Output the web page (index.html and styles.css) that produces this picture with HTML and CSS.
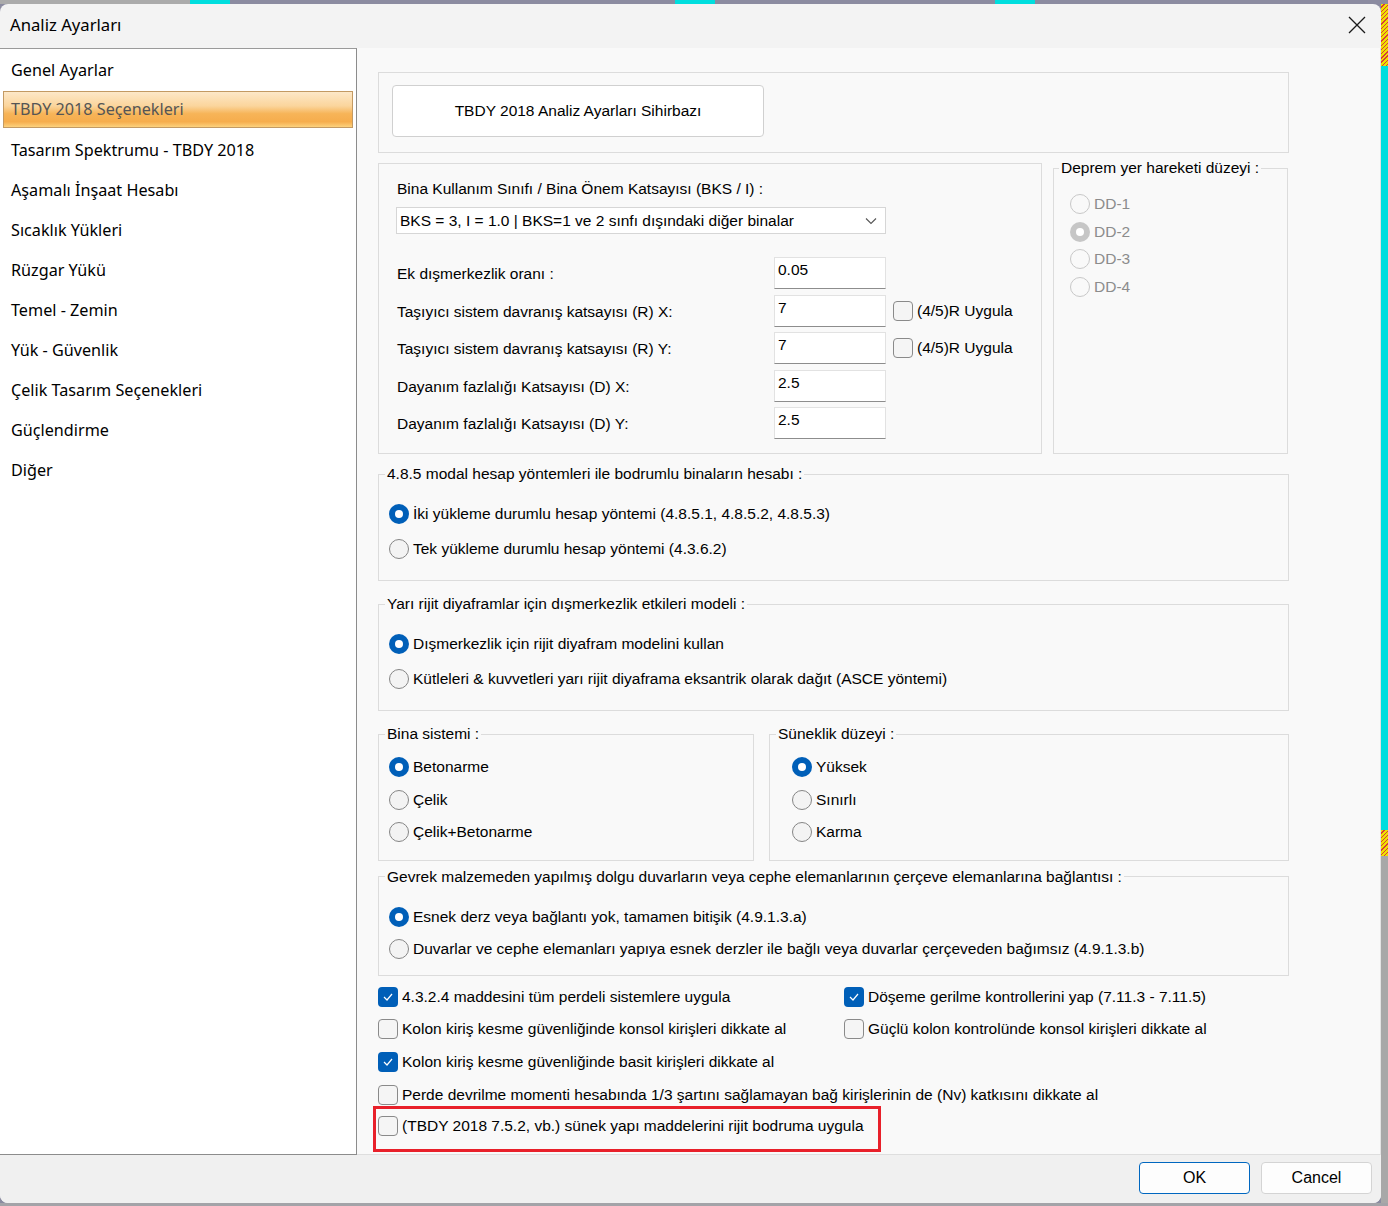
FILE: index.html
```html
<!DOCTYPE html>
<html lang="tr">
<head>
    <meta charset="UTF-8">
    <title>Analiz Ayarları</title>
    <link rel="stylesheet" href="styles.css">
</head>
<body>
    <div class="desk">
        <div class="topstrip">
            <span class="seg seg-gray"></span>
            <span class="seg seg-cyan"></span>
            <span class="seg seg-blue seg-w1"></span>
            <span class="seg seg-cyan"></span>
            <span class="seg seg-blue seg-w2"></span>
            <span class="seg seg-cyan"></span>
            <span class="seg seg-blue seg-fill"></span>
        </div>
        <div class="middle">
            <div class="dialog">
                <div class="titlebar">
                    <span class="title">Analiz Ayarları</span>
                    <svg class="close" width="18" height="18" viewBox="0 0 18 18">
                        <path d="M1 1 L17 17 M17 1 L1 17" stroke="#1a1a1a" stroke-width="1.3" fill="none"/>
                    </svg>
                </div>

                <div class="main">
                    <!-- sol menü -->
                    <ul class="sidebar">
                        <li class="item">Genel Ayarlar</li>
                        <li class="item selected">TBDY 2018 Seçenekleri</li>
                        <li class="item">Tasarım Spektrumu - TBDY 2018</li>
                        <li class="item">Aşamalı İnşaat Hesabı</li>
                        <li class="item">Sıcaklık Yükleri</li>
                        <li class="item">Rüzgar Yükü</li>
                        <li class="item">Temel - Zemin</li>
                        <li class="item">Yük - Güvenlik</li>
                        <li class="item">Çelik Tasarım Seçenekleri</li>
                        <li class="item">Güçlendirme</li>
                        <li class="item">Diğer</li>
                    </ul>

                    <div class="content">
                        <div class="wizard-box">
                            <button class="wizard-btn">TBDY 2018 Analiz Ayarları Sihirbazı</button>
                        </div>

                        <div class="row-two">
                            <div class="params">
                                <div class="caption">Bina Kullanım Sınıfı / Bina Önem Katsayısı (BKS / I) :</div>
                                <div class="select">
                                    <span>BKS = 3, I = 1.0 | BKS=1 ve 2 sınfı dışındaki diğer binalar</span>
                                    <svg width="12" height="8" viewBox="0 0 12 8"><path d="M1 1.5 L6 6.5 L11 1.5" stroke="#555" stroke-width="1.1" fill="none"/></svg>
                                </div>
                                <div class="fields">
                                    <div class="field">
                                        <span class="flabel">Ek dışmerkezlik oranı :</span>
                                        <div class="input">0.05</div>
                                    </div>
                                    <div class="field">
                                        <span class="flabel">Taşıyıcı sistem davranış katsayısı (R) X:</span>
                                        <div class="input">7</div>
                                        <label class="check small"><span class="box"></span>(4/5)R Uygula</label>
                                    </div>
                                    <div class="field">
                                        <span class="flabel">Taşıyıcı sistem davranış katsayısı (R) Y:</span>
                                        <div class="input">7</div>
                                        <label class="check small"><span class="box"></span>(4/5)R Uygula</label>
                                    </div>
                                    <div class="field">
                                        <span class="flabel">Dayanım fazlalığı Katsayısı (D) X:</span>
                                        <div class="input">2.5</div>
                                    </div>
                                    <div class="field">
                                        <span class="flabel">Dayanım fazlalığı Katsayısı (D) Y:</span>
                                        <div class="input">2.5</div>
                                    </div>
                                </div>
                            </div>

                            <fieldset class="group deprem">
                                <legend>Deprem yer hareketi düzeyi :</legend>
                                <div class="opts">
                                    <div class="radio disabled"><span class="dot"></span>DD-1</div>
                                    <div class="radio disabled on"><span class="dot"></span>DD-2</div>
                                    <div class="radio disabled"><span class="dot"></span>DD-3</div>
                                    <div class="radio disabled"><span class="dot"></span>DD-4</div>
                                </div>
                            </fieldset>
                        </div>

                        <fieldset class="group modal">
                            <legend>4.8.5 modal hesap yöntemleri ile bodrumlu binaların hesabı :</legend>
                            <div class="opts">
                                <div class="radio on"><span class="dot"></span>İki yükleme durumlu hesap yöntemi (4.8.5.1, 4.8.5.2, 4.8.5.3)</div>
                                <div class="radio"><span class="dot"></span>Tek yükleme durumlu hesap yöntemi (4.3.6.2)</div>
                            </div>
                        </fieldset>

                        <fieldset class="group modal">
                            <legend>Yarı rijit diyaframlar için dışmerkezlik etkileri modeli :</legend>
                            <div class="opts">
                                <div class="radio on"><span class="dot"></span>Dışmerkezlik için rijit diyafram modelini kullan</div>
                                <div class="radio"><span class="dot"></span>Kütleleri &amp; kuvvetleri yarı rijit diyaframa eksantrik olarak dağıt (ASCE yöntemi)</div>
                            </div>
                        </fieldset>

                        <div class="row-pair">
                            <fieldset class="group system">
                                <legend>Bina sistemi :</legend>
                                <div class="opts">
                                    <div class="radio on"><span class="dot"></span>Betonarme</div>
                                    <div class="radio"><span class="dot"></span>Çelik</div>
                                    <div class="radio"><span class="dot"></span>Çelik+Betonarme</div>
                                </div>
                            </fieldset>
                            <fieldset class="group ductility">
                                <legend>Süneklik düzeyi :</legend>
                                <div class="opts">
                                    <div class="radio on"><span class="dot"></span>Yüksek</div>
                                    <div class="radio"><span class="dot"></span>Sınırlı</div>
                                    <div class="radio"><span class="dot"></span>Karma</div>
                                </div>
                            </fieldset>
                        </div>

                        <fieldset class="group brittle">
                            <legend>Gevrek malzemeden yapılmış dolgu duvarların veya cephe elemanlarının çerçeve elemanlarına bağlantısı :</legend>
                            <div class="opts">
                                <div class="radio on"><span class="dot"></span>Esnek derz veya bağlantı yok, tamamen bitişik (4.9.1.3.a)</div>
                                <div class="radio"><span class="dot"></span>Duvarlar ve cephe elemanları yapıya esnek derzler ile bağlı veya duvarlar çerçeveden bağımsız (4.9.1.3.b)</div>
                            </div>
                        </fieldset>

                        <div class="checks">
                            <label class="check on"><span class="box"><svg width="12" height="10" viewBox="0 0 12 10"><path d="M2 5 L5 8 L10 2" stroke="#fff" stroke-width="1.2" fill="none"/></svg></span>4.3.2.4 maddesini tüm perdeli sistemlere uygula</label>
                            <label class="check on"><span class="box"><svg width="12" height="10" viewBox="0 0 12 10"><path d="M2 5 L5 8 L10 2" stroke="#fff" stroke-width="1.2" fill="none"/></svg></span>Döşeme gerilme kontrollerini yap (7.11.3 - 7.11.5)</label>
                            <label class="check"><span class="box"></span>Kolon kiriş kesme güvenliğinde konsol kirişleri dikkate al</label>
                            <label class="check"><span class="box"></span>Güçlü kolon kontrolünde konsol kirişleri dikkate al</label>
                            <label class="check on wide"><span class="box"><svg width="12" height="10" viewBox="0 0 12 10"><path d="M2 5 L5 8 L10 2" stroke="#fff" stroke-width="1.2" fill="none"/></svg></span>Kolon kiriş kesme güvenliğinde basit kirişleri dikkate al</label>
                            <label class="check wide"><span class="box"></span>Perde devrilme momenti hesabında 1/3 şartını sağlamayan bağ kirişlerinin de (Nv) katkısını dikkate al</label>
                            <label class="check wide marked"><span class="box"></span>(TBDY 2018 7.5.2, vb.) sünek yapı maddelerini rijit bodruma uygula</label>
                        </div>
                    </div>
                </div>

                <div class="footer">
                    <button class="btn primary">OK</button>
                    <button class="btn">Cancel</button>
                </div>
            </div>
            <div class="edge">
                <span class="hatch top"></span>
                <span class="cyan"></span>
                <span class="hatch low"></span>
                <span class="grey"></span>
            </div>
        </div>
        <div class="bottomstrip"></div>
    </div>
</body>
</html>
```

FILE: styles.css
```css
body {
    margin: 0;
    padding: 0;
    background-color: #a3a3a8;
    font-family: 'Liberation Sans', Arial, sans-serif;
    font-size: 15.5px;
    color: #000;
}

.desk {
    width: 1388px;
    height: 1206px;
    display: flex;
    flex-direction: column;
    overflow: hidden;
}

.topstrip {
    height: 4px;
    display: flex;
}

.seg {
    height: 4px;
}

.seg-gray {
    width: 190px;
    background-color: #ababab;
}

.seg-cyan {
    width: 40px;
    background-color: #00dede;
}

.seg-blue {
    background-color: #8b8ba0;
}

.seg-w1 {
    width: 445px;
}

.seg-w2 {
    width: 280px;
}

.seg-fill {
    flex: 1;
}

.middle {
    height: 1199px;
    display: flex;
    background-color: #8b8ba0;
}

.dialog {
    width: 1381px;
    display: flex;
    flex-direction: column;
    background-color: #f3f3f3;
    border-radius: 8px;
    overflow: hidden;
}

.titlebar {
    height: 44px;
    box-sizing: border-box;
    display: flex;
    align-items: center;
    justify-content: space-between;
    padding: 0 15px 3px 10px;
    font-family: 'Noto Sans', sans-serif;
    font-size: 16.7px;
}

.close {
    margin-top: 1px;
}

.main {
    height: 1107px;
    display: flex;
}

/* sol menü */
.sidebar {
    list-style: none;
    margin: 0;
    padding: 1px 0 0 0;
    width: 357px;
    box-sizing: border-box;
    background-color: #fff;
    border-top: 1px solid #9a9a9a;
    border-right: 1px solid #8c8c8c;
    border-bottom: 1px solid #8c8c8c;
    font-family: 'Noto Sans', sans-serif;
    font-size: 16.2px;
}

.item {
    height: 40px;
    line-height: 40px;
    padding-left: 11px;
}

.item.selected {
    height: 37px;
    box-sizing: border-box;
    line-height: 35px;
    margin: 1px 3px 2px 3px;
    padding-left: 7px;
    border: 1px solid #c39a63;
    color: #555;
    background: linear-gradient(to bottom, #fde8c8 0%, #fbd59c 40%, #f7b458 62%, #f6ad4d 85%, #fcd27e 100%);
}

.content {
    flex: 1;
    background-color: #f9f9f9;
    padding: 24px 0 0 21px;
    border-right: 1px solid #e3e3e3;
    border-bottom: 1px solid #dedede;
}

.wizard-box {
    width: 911px;
    height: 81px;
    box-sizing: border-box;
    border: 1px solid #dcdcdc;
    padding: 12px 13px;
}

.wizard-btn {
    width: 372px;
    height: 52px;
    background-color: #fff;
    border: 1px solid #d0d0d0;
    border-radius: 4px;
    font-family: 'Liberation Sans', Arial, sans-serif;
    font-size: 15.5px;
    color: #000;
}

.row-two {
    display: flex;
    width: 911px;
    gap: 11px;
    margin-top: 6px;
}

.params {
    width: 664px;
    height: 291px;
    box-sizing: border-box;
    margin-top: 4px;
    border: 1px solid #dcdcdc;
    padding: 16px 0 0 18px;
}

.caption {
    line-height: 18px;
}

.select {
    width: 490px;
    height: 27px;
    box-sizing: border-box;
    margin-top: 9px;
    margin-left: -1px;
    background-color: #fff;
    border: 1px solid #d6d6d6;
    display: flex;
    align-items: center;
    justify-content: space-between;
    padding: 0 8px 0 3px;
}

.fields {
    margin-top: 23px;
    display: flex;
    flex-direction: column;
    gap: 5.5px;
}

.field {
    height: 32px;
    display: flex;
    align-items: center;
}

.flabel {
    width: 377px;
    padding-top: 2px;
}

.input {
    width: 112px;
    height: 32px;
    box-sizing: border-box;
    background-color: #fff;
    border: 1px solid #e2e2e2;
    border-bottom-color: #8d8d8d;
    padding: 3px 0 0 3px;
    margin-right: 7px;
}

.group {
    margin: 0;
    padding: 0 0 0 10px;
    border: 1px solid #dcdcdc;
    min-width: 0;
    box-sizing: border-box;
}

.group legend {
    padding: 0 2px;
    margin-left: -4px;
    line-height: 18px;
}

.opts {
    display: flex;
    flex-direction: column;
}

.radio {
    display: flex;
    align-items: center;
    gap: 4px;
    height: 35px;
}

.dot {
    width: 20px;
    height: 20px;
    box-sizing: border-box;
    border-radius: 50%;
    border: 1px solid #858585;
    background-color: #f3f3f3;
    display: flex;
    align-items: center;
    justify-content: center;
}

.radio.on .dot {
    border: none;
    background-color: #005fb8;
}

.radio.on .dot::after {
    content: '';
    width: 8px;
    height: 8px;
    border-radius: 50%;
    background-color: #fff;
}

.radio.disabled {
    color: #8c8c8c;
    height: 27.7px;
}

.radio.disabled .dot {
    border-color: #c8c8c8;
    background-color: #f9f9f9;
}

.radio.disabled.on .dot {
    background-color: #c6c6c6;
}

.deprem {
    width: 235px;
    padding-left: 16px;
}

.deprem legend {
    margin-left: -11px;
}

.deprem .opts {
    padding-top: 13px;
}

.modal {
    width: 911px;
    margin-top: 11px;
}

.modal + .modal {
    margin-top: 14px;
}

.modal .opts {
    padding: 13px 0 14px;
}

.row-pair {
    display: flex;
    gap: 15px;
    width: 911px;
    margin-top: 14px;
}

.system {
    width: 376px;
}

.ductility {
    flex: 1;
    padding-left: 22px;
}

.ductility legend {
    margin-left: -16px;
}

.row-pair .radio {
    height: 32.5px;
}

.row-pair .opts {
    padding: 8px 0 11px;
}

.brittle {
    width: 911px;
    margin-top: 7px;
}

.brittle .radio {
    height: 32px;
}

.brittle .opts {
    padding: 15px 0 10px;
}

/* alt onay kutuları */
.checks {
    width: 911px;
    margin-top: 5px;
    display: grid;
    grid-template-columns: 466px 1fr;
    grid-auto-rows: 32.6px;
}

.check {
    display: flex;
    align-items: center;
    gap: 4px;
    white-space: nowrap;
}

.check.wide {
    grid-column: 1 / 3;
}

.box {
    width: 20px;
    height: 20px;
    box-sizing: border-box;
    border: 1px solid #8a8a8a;
    border-radius: 4px;
    background-color: #f5f5f5;
    display: flex;
    align-items: center;
    justify-content: center;
}

.check.on .box {
    border: none;
    background-color: #005fb8;
}

.check.marked {
    width: 508px;
    height: 46px;
    box-sizing: border-box;
    margin: -5px 0 0 -5px;
    border: 3px solid #e8202a;
    padding: 7px 0 0 2px;
    align-items: flex-start;
    line-height: 20px;
}

.footer {
    height: 48px;
    display: flex;
    justify-content: flex-end;
    align-items: flex-start;
    gap: 11px;
    padding: 7px 9px 0 0;
    box-sizing: border-box;
    background-color: #f0f0f0;
}

.btn {
    width: 111px;
    height: 32px;
    background-color: #fdfdfd;
    border: 1px solid #d4d4d4;
    border-radius: 4px;
    font-family: 'Liberation Sans', Arial, sans-serif;
    font-size: 16px;
    color: #000;
}

.btn.primary {
    border-color: #0067c0;
}

.edge {
    width: 7px;
    display: flex;
    flex-direction: column;
}

.hatch {
    background: repeating-linear-gradient(135deg, #f0e000 0px, #f0e000 2px, #d83a3a 2px, #d83a3a 3px);
}

.hatch.top {
    height: 62px;
}

.hatch.low {
    height: 26px;
}

.cyan {
    height: 764px;
    background-color: #00dede;
}

.grey {
    flex: 1;
    background-color: #a8a8a8;
}

.bottomstrip {
    height: 3px;
    background-color: #a3a3a8;
}
```
